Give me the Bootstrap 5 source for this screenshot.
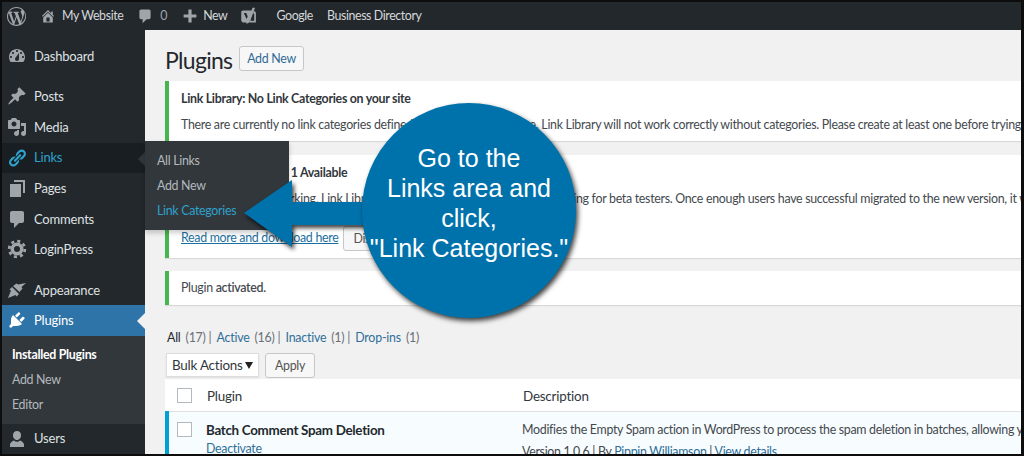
<!DOCTYPE html>
<html lang="en">
<head>
<meta charset="utf-8">
<title>Plugins</title>
<link rel="stylesheet" href="https://cdn.jsdelivr.net/npm/bootstrap@5.3.0/dist/css/bootstrap.min.css">
<style>
html,body{margin:0;background:#0c0c0c;overflow:hidden}
body{font-family:"Lato","Open Sans",sans-serif;font-size:12.4px;letter-spacing:-.3px;line-height:1.4;color:#44494e}
.wp-frame{width:1024px;height:456px;border:2px solid #0d0d0d;border-right-width:3px;position:relative;overflow:hidden;background:#f1f1f1}
.wp-top{height:28px;background:#23282d;color:#d5d8da;padding-left:5px;flex:none;letter-spacing:-.4px}
.wp-top svg{fill:#a0a5aa;flex:none}
.wp-top .bar-i{display:flex;align-items:center;white-space:nowrap}
.wp-body{height:424px;min-height:0}
.wp-side{width:143px;flex:none;background:#23282d;color:#dfe1e2;padding-top:11px;font-size:13px;letter-spacing:-.2px}
.side-i{height:30.6px;display:flex;align-items:center;gap:7px;padding-left:5px;padding-bottom:1px;position:relative;white-space:nowrap}
.side-i svg{width:20px;height:20px;fill:#a0a5aa;flex:none}
.side-i.sp{margin-top:10px}
.side-i.cur-link{background:#191e23;color:#2ea2cc}
.side-i.cur-link svg{fill:#2ea2cc}
.side-i.cur-link::after{content:"";position:absolute;right:0;top:9px;border:7px solid transparent;border-right-color:#32373c;border-left:0}
.side-i.cur-plug{background:#2f74a8;color:#fff;margin-top:-.6px}
.side-i.cur-plug svg{fill:#fff}
.side-i.cur-plug::after{content:"";position:absolute;right:0;top:8px;border:8px solid transparent;border-right-color:#f1f1f1;border-left:0}
.side-sub{background:#32373c;height:88px;padding:6px 0 0 10px;font-size:12.4px;letter-spacing:-.3px;color:#b4b9be}
.side-sub div{height:25px;display:flex;align-items:center}
.side-sub .on{color:#fff;font-weight:700}
.wp-fly{position:absolute;left:143px;top:139px;width:144px;height:89px;background:#32373c;color:#b4b9be;padding:7px 0 0 12px;box-shadow:0 3px 5px rgba(0,0,0,.2);z-index:5}
.wp-fly div{height:25px;display:flex;align-items:center}
.wp-fly .on{color:#2ea2cc}
.wp-main{padding-left:20px;min-width:0;flex:1;overflow:hidden}
.page-h{padding-top:16px;height:51px;gap:8px}
.page-h h1{font-size:23px;font-weight:400;margin:0;color:#23282d;line-height:1.3;width:66px;letter-spacing:-.7px}
.wp-btn{font-size:12.4px;line-height:1.2;padding:5px 9px;height:25px;border:1px solid #c4c8cb;border-radius:3px;background:#f7f7f7;color:#555;white-space:nowrap}
.wp-btn.blue{color:#2f6b96;width:65px;text-align:center;padding:5px 0}
.wp-note{background:#fff;border-left:4px solid #46b450;box-shadow:0 1px 1px rgba(0,0,0,.1);padding-left:12px;white-space:nowrap;overflow:hidden}
.n1{height:60px;margin-bottom:14px;padding-top:9px}
.n2{height:103px;margin-bottom:13px;padding-top:9px}
.n3{height:34px;display:flex;align-items:center}
.n1 p,.n2 p{margin:0 0 8px;height:18px}
.lead-t{font-weight:700;color:#32373c}
.wp-note a,.wp-subs a,.wp-table a{color:#2f6f99}
.wp-note a.ul{text-decoration:underline;color:#1b6f9e}
.n2 .act{margin-top:18px;gap:5px;height:24px;align-items:center}
.wp-subs{margin-top:21px;height:24px;align-items:center;color:#6a7076;gap:5px;white-space:nowrap;padding-left:2px;letter-spacing:-.22px}
.wp-subs a{text-decoration:none}
.wp-subs b{color:#23282d;font-weight:400}
.wp-tools{height:26px;gap:6px;padding-left:1px;margin-top:3px}
.wp-sel{width:93px;height:24px;background:#fff;border:1px solid #ddd;display:flex;align-items:center;justify-content:space-between;padding:0 5px;font-size:13.4px;letter-spacing:-.2px;color:#32373c;white-space:nowrap;box-shadow:0 1px 2px rgba(0,0,0,.07)}
.wp-sel i{border:4px solid transparent;border-top:7px solid #222;border-bottom:0}
.wp-table{table-layout:fixed;width:856px;background:#fff;border-collapse:collapse;margin:0;white-space:nowrap}
.wp-table th,.wp-table td{font-weight:400;overflow:hidden;padding:0;vertical-align:top}
.wp-table th{height:32px;border-bottom:1px solid #e1e1e1;padding-top:8px;font-size:13.4px;letter-spacing:-.2px;color:#32373c}
.wp-table th+th{padding-left:1px}
.wp-table td{background:#f7fcfe;padding-top:9px}
.wp-table td:first-child{border-left:4px solid #00a0d2}
.wp-table td:first-child .tick{margin-left:8px}
.wp-table th:first-child .tick{margin-left:10px}
.tick{display:block;width:15px;height:15px;border:1px solid #b4b9be;background:#fff;margin-top:1px}
.p-name{font-weight:700;color:#23282d;margin:0;height:19px;font-size:13.4px;letter-spacing:-.3px}
.p-desc{margin:0;height:22px}
.wp-call{position:absolute;left:360px;top:101px;width:214px;height:215px;border-radius:50%;background:#0072ab;box-shadow:2px 3px 5px rgba(0,0,0,.75);color:#fff;font-family:"Liberation Sans",Arial,sans-serif;font-size:25px;letter-spacing:0;line-height:30px;text-align:center;z-index:7;padding-top:40px;white-space:nowrap}
.wp-arrow{position:absolute;left:240px;top:176px;z-index:6;overflow:visible;filter:drop-shadow(2px 3px 2px rgba(0,0,0,.75))}
</style>
</head>
<body>
<div class="wp-frame d-flex flex-column">
  <div class="wp-top d-flex align-items-center">
    <svg width="19" height="19" viewBox="0 0 20 20"><path d="M20 10c0-5.52-4.48-10-10-10S0 4.48 0 10s4.48 10 10 10 10-4.48 10-10zM10 1.110c2.330 0 4.450.890 6.030 2.350-.680-.020-1.600.350-1.600 1.610 0 .790.470 1.450.950 2.230.360.640.570 1.430.570 2.590 0 1.560-1.470 5.240-1.470 5.240l-3.190-8.790c.570-.020.860-.180.860-.180.530-.060.470-1.310-.060-1.280 0 0-1.510.120-2.490.120-.910 0-2.440-.120-2.440-.12-.530-.030-.590 1.260-.060 1.280l.960.090 1.320 3.580-1.850 5.550-3.080-9.130c.570-.020.860-.180.860-.180.530-.060.470-1.310-.060-1.280 0 0-1.510.120-2.490.120-.180 0-.390 0-.610-.010C4.120 2.690 6.870 1.110 10 1.110zM1.110 10c0-1.290.280-2.510.770-3.620l4.240 11.620C3.160 16.560 1.110 13.520 1.110 10zM10.130 10.770l2.670 7.320c.020.040.040.080.060.120-.900.320-1.860.490-2.860.490-.840 0-1.650-.120-2.420-.350zM14.780 17.180l2.680-7.750c.500-1.250.670-2.250.670-3.140 0-.320-.020-.620-.060-.900.680 1.250 1.070 2.680 1.070 4.210 0 3.250-1.760 6.090-4.360 7.580z"/></svg>
    <div class="bar-i" style="margin-left:14px"><svg width="16" height="16" viewBox="0 0 20 20"><path d="M16 8.500l1.530 1.530-1.060 1.060L10 4.620l-6.470 6.470-1.060-1.060L10 2.500l4 4v-2h2v4zm-6-2.460l6 5.990V18H4v-5.970zM12 17v-5H8v5h4z"/></svg><span style="margin-left:6px">My Website</span></div>
    <div class="bar-i" style="margin-left:14px"><svg width="16" height="16" viewBox="0 0 20 20"><path d="M5 2h10c1.100 0 2 .9 2 2v8c0 1.100-.9 2-2 2h-3l-5 5v-5H5c-1.100 0-2-.9-2-2V4c0-1.100.9-2 2-2z"/></svg><span style="margin-left:7px;color:#a0a5aa">0</span></div>
    <div class="bar-i" style="margin-left:15px"><svg width="16" height="16" viewBox="0 0 20 20"><path d="M18 8v4h-6v6H8v-6H2V8h6V2h4v6z"/></svg><span style="margin-left:5px">New</span></div>
    <div class="bar-i" style="margin-left:13px"><svg width="18" height="19" viewBox="0 0 20 22"><path d="M3 4h11l-1 3-3.500 10H10v1H4c-1.700 0-3-1.300-3-3V6c0-1.100.9-2 2-2zm1 3l3.200 7L8.500 11 6.800 7zM15 4.500c1.800 0 3 1.200 3 3V18h-7.500l.7-2H16V8l-1-.4z"/><path d="M14 1h3l-5.500 15c-.5 1.500-2 3-4.500 3.500V17c1.500-.3 2.200-1 2.500-2z"/></svg></div>
    <div class="bar-i" style="margin-left:18px">Google</div>
    <div class="bar-i" style="margin-left:14px">Business Directory</div>
  </div>
  <div class="wp-body d-flex">
    <div class="wp-side">
      <div class="side-i"><svg viewBox="0 0 20 20"><path d="M3.760 16h12.480c1.100-1.370 1.760-3.110 1.760-5 0-4.420-3.580-8-8-8s-8 3.580-8 8c0 1.890.66 3.630 1.760 5zM10 4c.55 0 1 .45 1 1s-.45 1-1 1-1-.45-1-1 .45-1 1-1zM6 6c.55 0 1 .45 1 1s-.45 1-1 1-1-.45-1-1 .45-1 1-1zm8 0c.55 0 1 .45 1 1s-.45 1-1 1-1-.45-1-1 .45-1 1-1zm-5.370 5.550L12 7v6c0 1.100-.9 2-2 2s-2-.9-2-2c0-.57.24-1.080.63-1.450zM4 10c.55 0 1 .45 1 1s-.45 1-1 1-1-.45-1-1 .45-1 1-1zm12 0c.55 0 1 .45 1 1s-.45 1-1 1-1-.45-1-1 .45-1 1-1z"/></svg>Dashboard</div>
      <div class="side-i sp"><svg viewBox="0 0 20 20"><path d="M10.440 3.020l1.820-1.820 6.360 6.350-1.830 1.820c-1.050-.68-2.480-.57-3.410.36l-.75.75c-.92.93-1.040 2.350-.35 3.410l-1.830 1.820-2.410-2.410-2.800 2.790c-.42.42-3.380 2.710-3.800 2.290s1.860-3.390 2.280-3.810l2.790-2.790L4.100 9.360l1.830-1.820c1.050.69 2.480.57 3.400-.36l.75-.75c.93-.92 1.050-2.350.36-3.410z"/></svg>Posts</div>
      <div class="side-i"><svg viewBox="0 0 20 20"><path d="M13 11V4c0-.55-.45-1-1-1h-1.670L9 1H5L3.670 3H2c-.55 0-1 .45-1 1v7c0 .55.45 1 1 1h10c.55 0 1-.45 1-1zM7 4.500c1.380 0 2.500 1.120 2.500 2.500S8.380 9.500 7 9.500 4.500 8.380 4.500 7 5.620 4.500 7 4.500zM14 6h5v10.500c0 1.380-1.120 2.500-2.500 2.500S14 17.880 14 16.500s1.120-2.500 2.500-2.500c.17 0 .34.020.5.050V9h-3V6zm-4 8.050V13h2v3.500c0 1.380-1.120 2.500-2.500 2.500S7 17.880 7 16.500 8.120 14 9.500 14c.17 0 .34.020.5.050z"/></svg>Media</div>
      <div class="side-i cur-link"><svg viewBox="0 0 20 20"><path d="M17.740 2.760c1.680 1.690 1.680 4.410 0 6.100l-1.530 1.520c-1.120 1.120-2.700 1.470-4.140 1.090l2.620-2.610.76-.77.76-.76c.84-.84.84-2.200 0-3.040-.84-.85-2.200-.85-3.040 0l-.77.76-3.380 3.380c-.37-1.440-.02-3.020 1.100-4.140l1.520-1.530c1.690-1.680 4.420-1.680 6.100 0zM8.590 13.430l5.340-5.340c.42-.42.42-1.100 0-1.520-.44-.43-1.130-.39-1.530 0l-5.330 5.340c-.42.42-.42 1.100 0 1.520.44.43 1.130.39 1.520 0zm-.76 2.290l4.140-4.150c.38 1.440.03 3.020-1.090 4.140l-1.520 1.530c-1.690 1.680-4.410 1.680-6.100 0-1.680-1.680-1.680-4.420 0-6.100l1.530-1.520c1.120-1.120 2.700-1.470 4.140-1.100l-4.140 4.150c-.85.84-.85 2.200 0 3.050.84.84 2.200.84 3.040 0z"/></svg>Links</div>
      <div class="side-i"><svg viewBox="0 0 20 20"><path d="M7 2h11v13h-2V4H7zM3 6h11v13H3z"/></svg>Pages</div>
      <div class="side-i"><svg viewBox="0 0 20 20"><path d="M5 2h10c1.100 0 2 .9 2 2v8c0 1.100-.9 2-2 2h-3l-5 5v-5H5c-1.100 0-2-.9-2-2V4c0-1.100.9-2 2-2z"/></svg>Comments</div>
      <div class="side-i"><svg viewBox="0 0 20 20"><circle cx="10" cy="10" r="7.800" fill="none" stroke="#a0a5aa" stroke-width="2.800" stroke-dasharray="3.060 3.060"/><path fill-rule="evenodd" d="M10 3.500a6.500 6.500 0 1 1 0 13 6.500 6.500 0 0 1 0-13zm0 3.500a3 3 0 1 0 0 6 3 3 0 0 0 0-6z"/></svg>LoginPress</div>
      <div class="side-i sp"><svg viewBox="0 0 20 20"><path d="M19 3l-8 1.500-1.500-1L6 6l6.500 6 3-3.500-1-1.500zM5 7L2.500 9.500l1.500 1L1 18l7.500-3 1 1.500L12 14z"/></svg>Appearance</div>
      <div class="side-i cur-plug"><svg viewBox="0 0 20 20"><path d="M13.110 4.360L9.870 7.600 8 5.730l3.240-3.240c.35-.34 1.050-.2 1.560.31.52.51.66 1.210.31 1.560zm-8 1.770l.91-1.120 9.010 9.010-1.190.84c-.71.71-2.630 1.160-3.820 1.160H6.140L4.900 17.260c-.59.59-1.540.59-2.120 0-.59-.58-.59-1.530 0-2.120l1.240-1.240v-3.880c0-1.130.52-3.110 1.090-3.890zm7.260 3.970l3.240-3.240c.34-.35 1.040-.21 1.550.31.52.51.66 1.210.31 1.550l-3.240 3.250z"/></svg>Plugins</div>
      <div class="side-sub"><div class="on">Installed Plugins</div><div>Add New</div><div>Editor</div></div>
      <div class="side-i"><svg viewBox="0 0 20 20"><path d="M10 2a4 4 0 0 1 4 4.500c0 2.200-1.700 4.500-4 4.500S6 8.700 6 6.500A4 4 0 0 1 10 2zM3 18v-2.500c0-1.700 2.500-3.500 4-4 .8.800 1.800 1.200 3 1.200s2.200-.4 3-1.200c1.500.5 4 2.300 4 4V18z"/></svg>Users</div>
    </div>
    <div class="wp-main">
      <div class="page-h d-flex align-items-start"><h1>Plugins</h1><div class="wp-btn blue">Add New</div></div>
      <div class="wp-note n1">
        <p class="lead-t">Link Library: No Link Categories on your site</p>
        <p>There are currently no link categories defined on your site at this time. Link Library will not work correctly without categories. Please create at least one before trying to use it.</p>
      </div>
      <div class="wp-note n2">
        <p class="lead-t">Link Library 7.0 Beta 1 Available</p>
        <p>After a lot of hard working, Link Library 7.0 is finally out and we are now looking for beta testers. Once enough users have successful migrated to the new version, it will be released.</p>
        <div class="act d-flex"><a class="ul" href="#">Read more and download here</a><div class="wp-btn">Dismiss</div></div>
      </div>
      <div class="wp-note n3"><span>Plugin <span class="fw-semibold">activated.</span></span></div>
      <div class="wp-subs d-flex"><b>All</b> (17) | <a href="#">Active</a> (16) | <a href="#">Inactive</a> (1) | <a href="#">Drop-ins</a> (1)</div>
      <div class="wp-tools d-flex"><div class="wp-sel">Bulk Actions <i></i></div><div class="wp-btn">Apply</div></div>
      <table class="wp-table">
        <colgroup><col style="width:39px"><col style="width:316px"><col></colgroup>
        <tr><th><span class="tick"></span></th><th>Plugin</th><th>Description</th></tr>
        <tr><td><span class="tick"></span></td><td><p class="p-name">Batch Comment Spam Deletion</p><a href="#">Deactivate</a></td><td><p class="p-desc">Modifies the Empty Spam action in WordPress to process the spam deletion in batches, allowing you to clear large amounts.</p>Version 1.0.6 | By <a href="#">Pippin Williamson</a> | <a href="#">View details</a></td></tr>
      </table>
    </div>
  </div>
  <div class="wp-fly"><div>All Links</div><div>Add New</div><div class="on">Link Categories</div></div>
  <svg class="wp-arrow" width="130" height="76" viewBox="0 0 130 76"><path d="M2 35 50 2V24H130V47H50V69z" fill="#0072ab"/></svg>
  <div class="wp-call">Go to the<br>Links area and<br>click,<br>"Link Categories."</div>
</div>
</body>
</html>
